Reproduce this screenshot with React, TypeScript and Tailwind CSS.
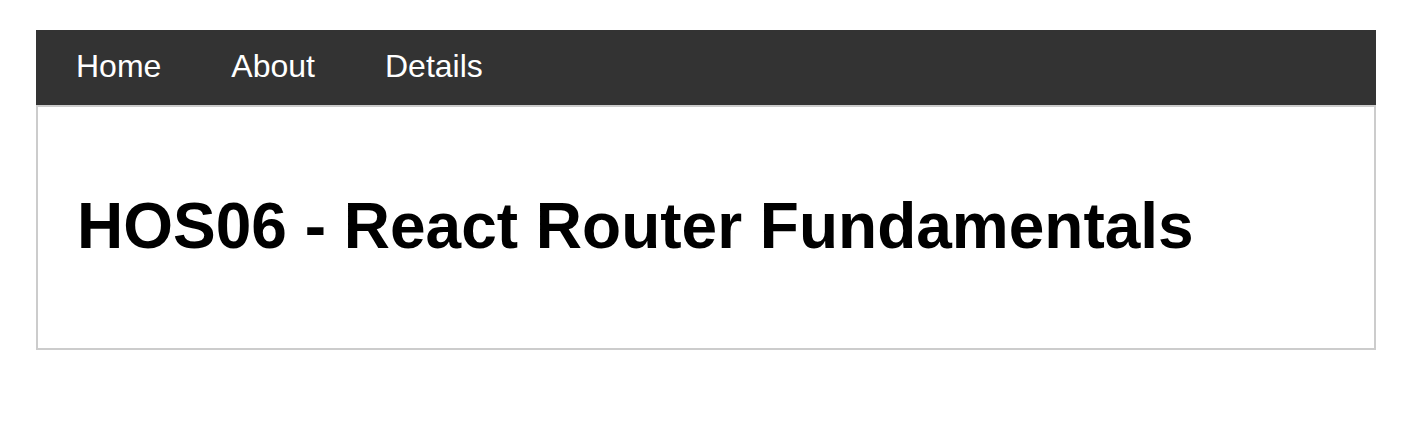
export default function App() {
  const links = ["Home", "About", "Details"];

  return (
    <div className="min-h-[432px] bg-white pl-[36px] pr-[40px] pt-[30px] font-['Liberation_Sans',Arial,sans-serif]">
      {/* Nav bar */}
      <nav className="flex gap-[70px] bg-[#333333] pl-[40px] pt-[18px] pb-[20px]">
        {links.map((link) => (
          <a key={link} href="#" className="text-[32px] leading-[37px] text-white">
            {link}
          </a>
        ))}
      </nav>

      {/* Content */}
      <div className="border-2 border-[#cccccc] pl-[39px] pt-[82px] pb-[85px]">
        <h1 className="text-[64px] font-bold leading-[74px] text-black">
          HOS06 - React Router Fundamentals
        </h1>
      </div>
    </div>
  );
}
